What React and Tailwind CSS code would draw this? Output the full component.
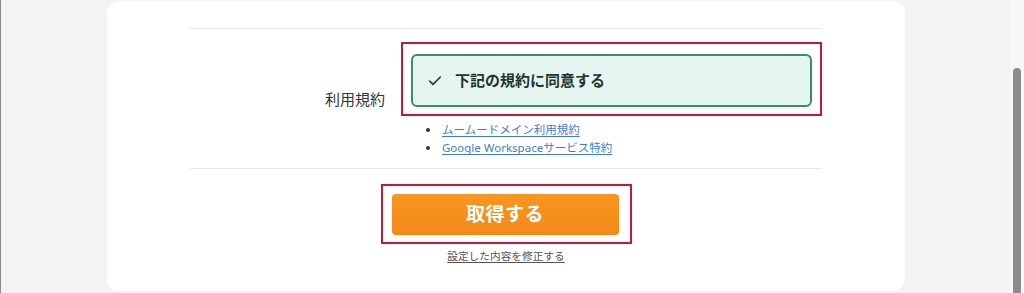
import { Check } from 'lucide-react';

const links = ['ムームードメイン利用規約', 'Google Workspaceサービス特約'];

export default function App() {
  return (
    <div
      className="flex h-[293px] w-full overflow-hidden border-l border-[#8a8a8a] bg-[#f2f3f2] text-[#333]"
      style={{ fontFamily: '"Noto Sans", "Noto Sans CJK JP", sans-serif' }}
    >
      <div className="flex-1">
        <div className="ml-[106px] mt-px h-[290px] w-[798px] rounded-xl bg-white pt-[27px]">
          <div className="mx-auto w-[632px]">
            {/* terms row */}
            <div className="flex items-center border-t border-[#e9e9e9] pb-[11px] pt-[13px]">
              <div className="w-[211px] pr-[16px] text-right text-[15px] leading-none">利用規約</div>
              <div className="flex-1">
                <div className="border-2 border-[#c8182f] px-[8px] pb-[7px] pt-[10px]">
                  <label className="flex h-[53px] items-center rounded-[6px] border-2 border-[#3b8a70] bg-[#e5f6f0] pl-[14px]">
                    <Check size={16} strokeWidth={2.4} className="text-[#1d3a33]" />
                    <span className="ml-[12px] text-[15px] font-bold text-[#1e3530]">下記の規約に同意する</span>
                  </label>
                </div>
                <ul className="pl-[25px] pt-[5px]">
                  {links.map((t) => (
                    <li key={t} className="flex h-[18px] items-center text-[11.5px]">
                      <span className="mr-[12px] h-[4px] w-[4px] rounded-full bg-[#333]" />
                      <a href="#" className="text-[#3f7fbf] underline underline-offset-2">
                        {t}
                      </a>
                    </li>
                  ))}
                </ul>
              </div>
            </div>

            {/* submit */}
            <div className="flex flex-col items-center border-t border-[#e9e9e9] pt-[15px]">
              <div className="border-2 border-[#c8182f] pb-[7px] pl-[9px] pr-[11px] pt-[8px]">
                <button className="flex h-[41px] w-[227px] items-center justify-center rounded-[4px] bg-gradient-to-b from-[#f8961f] to-[#f3891a] text-[19px] font-bold tracking-wide text-white">
                  取得する
                </button>
              </div>
              <a href="#" className="mt-[4px] text-[10.7px] text-[#555] underline underline-offset-2">
                設定した内容を修正する
              </a>
            </div>
          </div>
        </div>
      </div>

      {/* scrollbar */}
      <div className="flex w-[14px] flex-col bg-[#f7f7f7] pl-[3px] pr-[3px]">
        <div className="mt-[68px] flex-1 rounded-t-full bg-[#8b8b8b]" />
      </div>
    </div>
  );
}
